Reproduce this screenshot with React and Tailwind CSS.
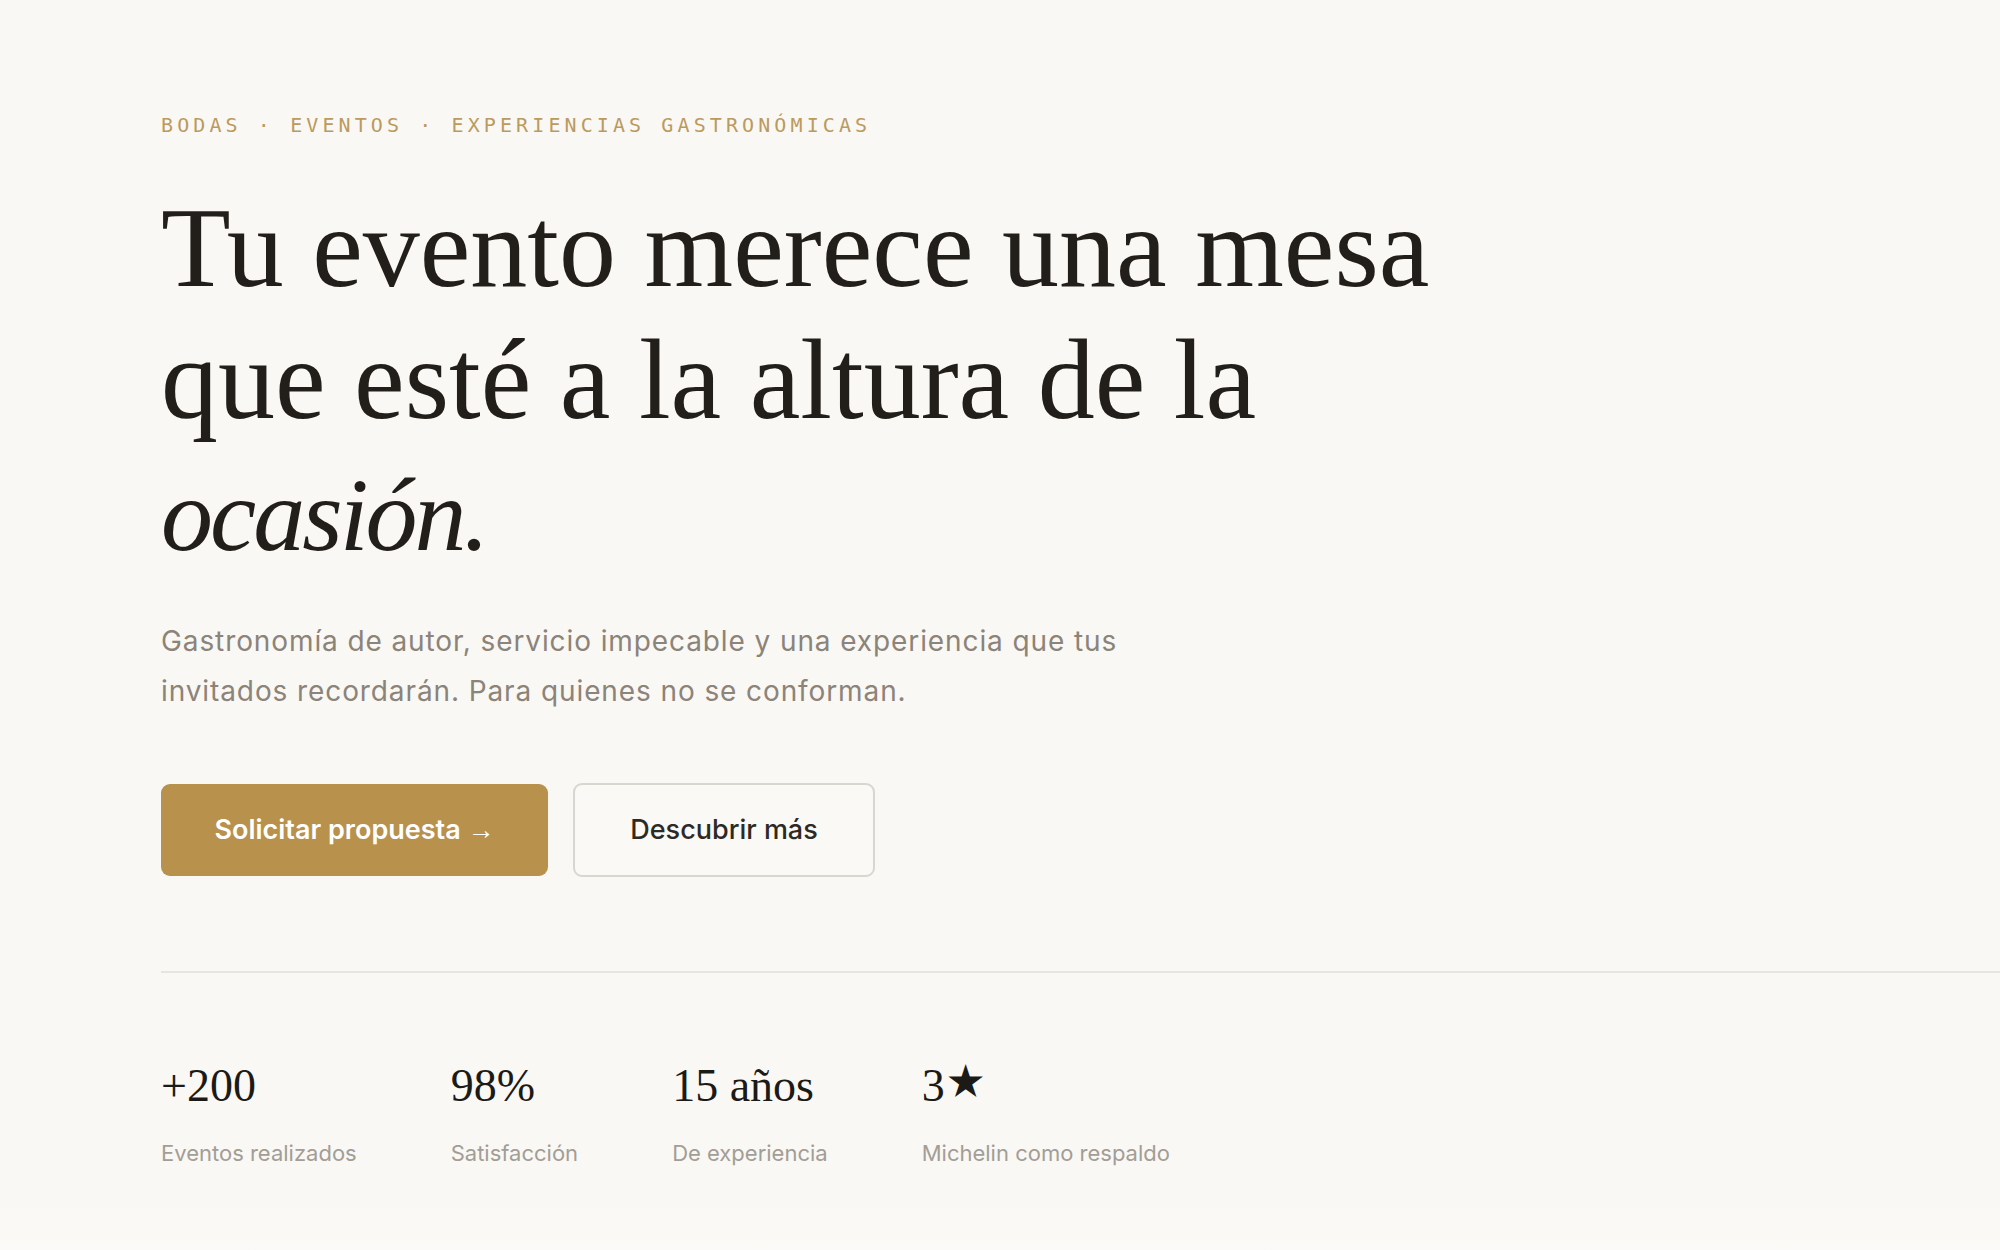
const serif = "font-['Liberation_Serif','Times_New_Roman',serif]";
const sans = "font-['Inter','Liberation_Sans',sans-serif]";

const stats = [
  { value: "+200", label: "Eventos realizados" },
  { value: "98%", label: "Satisfacción" },
  { value: "15 años", label: "De experiencia" },
  { value: "3", star: true, label: "Michelin como respaldo" },
];

function Stat({ value, star, label }) {
  return (
    <div className="flex flex-col">
      <span className={`${serif} text-[46px] leading-none text-[#1c1a17]`}>
        {value}
        {star && <span className={`${sans} text-[40px] align-top`}>★</span>}
      </span>
      <span className={`${sans} mt-[33px] text-[22px] leading-none text-[#a39d96]`}>{label}</span>
    </div>
  );
}

export default function App() {
  return (
    <div className="min-h-screen w-full overflow-hidden bg-[#f9f8f4]">
      <section className="pl-[161px] pt-[115px] pb-[36px]">
        <p className="font-['DejaVu_Sans_Mono','Liberation_Mono',monospace] text-[20px] leading-none tracking-[4.1px] text-[#bb9a5f]">
          BODAS · EVENTOS · EXPERIENCIAS GASTRONÓMICAS
        </p>

        <h1 className={`${serif} mt-[47px] text-[114px] leading-[132px] font-normal text-[#221f1b]`}>
          Tu evento merece una mesa
          <br />
          que esté a la altura de la
          <br />
          <em className="italic text-[104px] tracking-[-3px]">ocasión.</em>
        </h1>

        <p className={`${sans} mt-[35px] text-[28px] leading-[50px] tracking-[0.9px] text-[#8c8379]`}>
          Gastronomía de autor, servicio impecable y una experiencia que tus
          <br />
          invitados recordarán. Para quienes no se conforman.
        </p>

        <div className={`${sans} mt-[67px] flex items-center gap-[25px]`}>
          <button className="h-[92px] w-[387px] rounded-[9px] bg-[#b8914c] text-[27px] font-semibold text-white">
            Solicitar propuesta <span className="font-['Liberation_Sans',sans-serif] font-normal">→</span>
          </button>
          <button className="h-[94px] w-[302px] rounded-[9px] border-2 border-[#d9d5cf] bg-[#faf9f6] text-[27px] font-medium text-[#2d2a26]">
            Descubrir más
          </button>
        </div>

        <div className="mt-[94px] border-t-2 border-[#e8e5e0]" />

        <div className="flex gap-[94px] pt-[90px]">
          {stats.map((s) => (
            <Stat key={s.label} {...s} />
          ))}
        </div>
      </section>
      <div className="h-[60px] bg-gradient-to-b from-[#f9f8f4] to-[#fbfaf8]" />
    </div>
  );
}
